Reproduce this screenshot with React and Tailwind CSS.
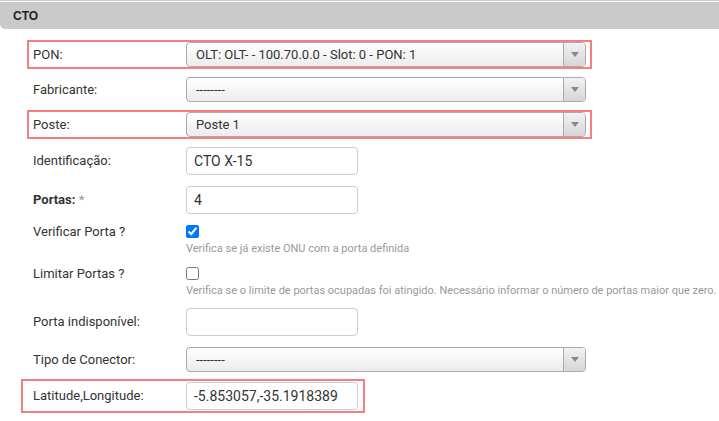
import React from "react";

const font = { fontFamily: "Roboto, 'Noto Sans', sans-serif" };

function Select({ value }) {
  return (
    <div className="flex h-[25px] w-[400px] rounded-[4px] border border-[#aaaaaa] bg-gradient-to-b from-white to-[#ececec] overflow-hidden">
      <div className="flex-1 flex items-center pl-[9px] text-[13px] text-[#333] leading-none">{value}</div>
      <div className="w-[22px] flex items-center justify-center border-l border-[#aaaaaa] bg-gradient-to-b from-[#f2f2f2] to-[#d6d6d6]">
        <div className="w-0 h-0 border-l-[4px] border-r-[4px] border-t-[5px] border-l-transparent border-r-transparent border-t-[#888]" />
      </div>
    </div>
  );
}

function Input({ value }) {
  return (
    <div className="h-[28px] w-[172px] rounded-[4px] border border-[#cccccc] bg-white flex items-center pl-[7px] text-[14px] text-[#333]">
      {value}
    </div>
  );
}

function Row({ label, children, highlight, mt, bold, star }) {
  return (
    <div
      className={`ml-[27px] w-[565px] flex items-center border-2 pl-[4px] pr-[4px] ${highlight ? "border-[#f47f7f]" : "border-transparent"}`}
      style={{ marginTop: mt }}
    >
      <div className={`w-[153px] text-[13px] text-[#333] ${bold ? "font-bold" : ""}`}>
        {label}
        {star && <span className="font-normal text-[#999]"> *</span>}
      </div>
      {children}
    </div>
  );
}

function CheckRow({ label, checked, help, mt }) {
  return (
    <div className="ml-[27px] w-[692px] flex items-start border-2 border-transparent pl-[4px]" style={{ marginTop: mt }}>
      <div className="w-[153px] h-[14px] flex items-center text-[13px] text-[#333]">{label}</div>
      <div className="flex flex-col">
        <div className="h-[13px] flex items-center">
          <input type="checkbox" defaultChecked={checked} className="m-0 w-[13px] h-[13px] accent-[#0075ff]" />
        </div>
        <div className="mt-[4px] text-[11px] leading-[14px] text-[#999] whitespace-nowrap">{help}</div>
      </div>
    </div>
  );
}

export default function App() {
  return (
    <div className="w-[719px] h-[421px] bg-white overflow-hidden" style={font}>
      <div className="h-[1px] bg-[#cccccc]" />
      <div className="h-[1px] bg-white" />
      <div className="h-[27px] bg-[#cacaca] rounded-bl-[5px] flex items-center pl-[13px]">
        <span className="text-[12px] font-bold text-[#222]" style={{ fontFamily: "'Liberation Sans', Arial, sans-serif" }}>CTO</span>
      </div>

      <Row label="PON:" highlight mt={11}>
        <Select value="OLT: OLT- - 100.70.0.0 - Slot: 0 - PON: 1" />
      </Row>
      <Row label="Fabricante:" mt={6}>
        <Select value="--------" />
      </Row>
      <Row label="Poste:" highlight mt={6}>
        <Select value="Poste 1" />
      </Row>
      <Row label="Identificação:" mt={6}>
        <Input value="CTO X-15" />
      </Row>
      <Row label="Portas:" bold star mt={7}>
        <Input value="4" />
      </Row>
      <CheckRow label="Verificar Porta ?" checked mt={7} help="Verifica se já existe ONU com a porta definida" />
      <CheckRow
        label="Limitar Portas ?"
        mt={7}
        help="Verifica se o limite de portas ocupadas foi atingido. Necessário informar o número de portas maior que zero."
      />
      <Row label="Porta indisponível:" mt={6}>
        <Input value="" />
      </Row>
      <Row label="Tipo de Conector:" mt={7}>
        <Select value="--------" />
      </Row>
      <div className="ml-[21px] w-[344px] mt-[5px] h-[34px] flex items-center border-2 border-[#f47f7f] pl-[10px]">
        <div className="w-[153px] text-[13px] text-[#333]">Latitude,Longitude:</div>
        <Input value="-5.853057,-35.1918389" />
      </div>
    </div>
  );
}
